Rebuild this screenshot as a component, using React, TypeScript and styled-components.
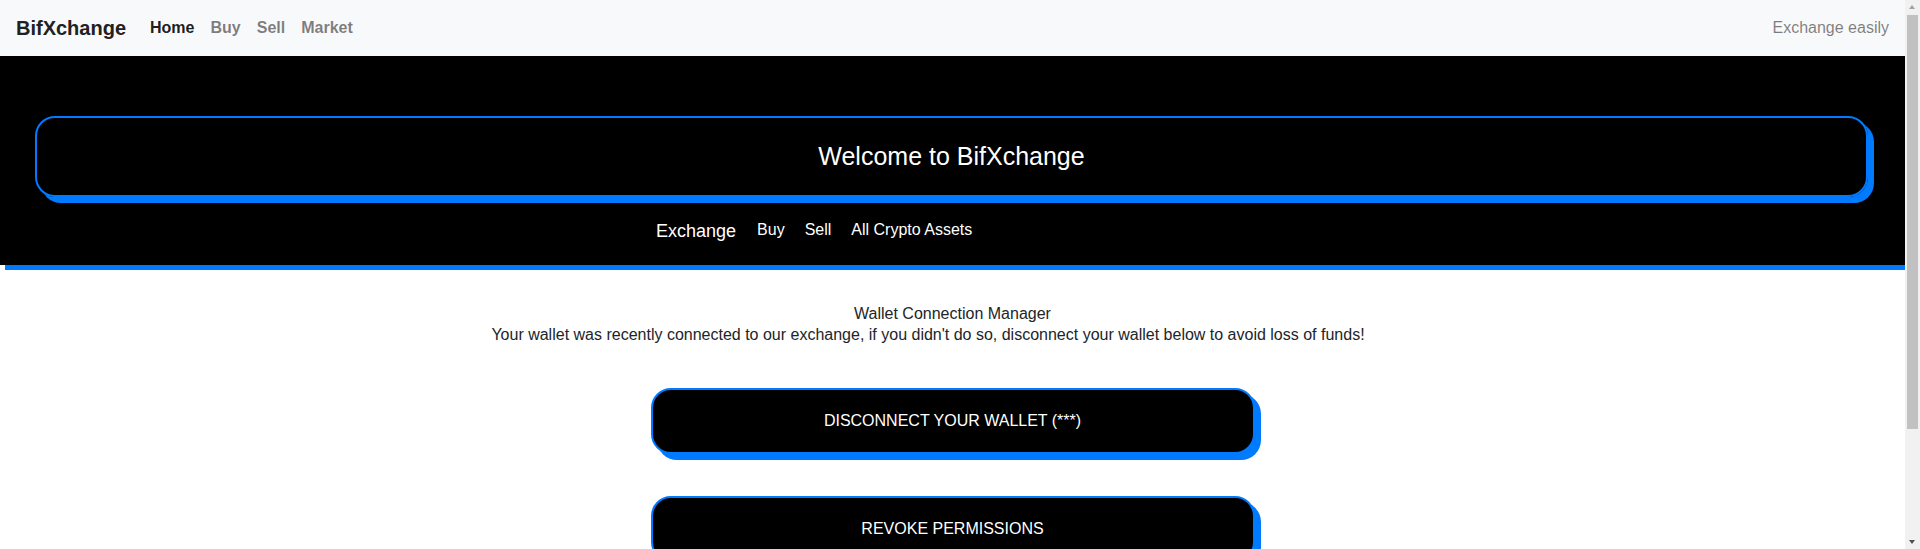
import React from "react";
import styled, { createGlobalStyle } from "styled-components";

const Global = createGlobalStyle`
  html, body { margin: 0; padding: 0; }
  body {
    font-family: "Liberation Sans", Arial, Helvetica, sans-serif;
    font-size: 16px;
    color: #212529;
    background: #fff;
  }
  * { box-sizing: border-box; }
`;

const Page = styled.div`
  margin-right: 15px;
  overflow: hidden;
  padding-bottom: 6px;
`;

const Navbar = styled.nav`
  height: 56px;
  background: #f8f9fa;
  display: flex;
  align-items: center;
  padding: 0 16px;
`;

const Brand = styled.a`
  font-size: 20px;
  font-weight: 700;
  color: #212121;
  margin-right: 16px;
  text-decoration: none;
  line-height: 30px;
`;

const NavLinks = styled.div`
  display: flex;
  align-items: center;
`;

const NavLink = styled.a<{ $active?: boolean }>`
  padding: 8px;
  font-size: 16px;
  font-weight: 700;
  text-decoration: none;
  color: ${(p) => (p.$active ? "rgba(0,0,0,0.9)" : "rgba(0,0,0,0.5)")};
`;

const NavText = styled.span`
  margin-left: auto;
  color: rgba(0, 0, 0, 0.5);
  font-size: 16px;
`;

const Hero = styled.header`
  background: #000;
  height: 209px;
  padding: 60px 37px 0 35px;
  box-shadow: 5px 5px 0 #007bff;
  display: flex;
  flex-direction: column;
`;

const WelcomeCard = styled.div`
  height: 81px;
  border: 2px solid #007bff;
  border-radius: 20px;
  box-shadow: 6px 6px 0 #007bff;
  display: flex;
  align-items: center;
  justify-content: center;
  color: #fff;
  font-size: 25px;
`;

const SubNav = styled.div`
  flex: 1;
  display: flex;
  align-items: center;
  padding: 0 0 2px 621px;
  gap: 20px;
  color: #fff;
`;

const SubBrand = styled.span`
  font-size: 18px;
  padding-top: 3px;
  margin-right: 1px;
`;

const SubLink = styled.a`
  font-size: 16px;
  color: #fff;
  text-decoration: none;
`;

const Main = styled.main`
  padding: 38px 0 116px;
  display: flex;
  flex-direction: column;
  align-items: center;
`;

const Intro = styled.div`
  text-align: center;
  line-height: 21px;
  font-size: 16px;
  color: #212529;
`;

const IntroTitle = styled.div``;

const IntroNote = styled.div`
  padding-right: 49px;
`;

const Buttons = styled.div`
  margin-top: 43px;
  display: flex;
  flex-direction: column;
  align-items: center;
  gap: 42px;
`;

const ActionButton = styled.button`
  width: 604px;
  height: 66px;
  background: #000;
  color: #fff;
  border: 2px solid #007bff;
  border-radius: 20px;
  box-shadow: 6px 6px 0 #007bff;
  font-family: "Liberation Sans", Arial, Helvetica, sans-serif;
  font-size: 16px;
  text-transform: uppercase;
  cursor: pointer;
`;

const Scrollbar = styled.div`
  position: fixed;
  top: 0;
  right: 0;
  width: 15px;
  height: 100vh;
  background: #f1f1f1;
`;

const Thumb = styled.div`
  position: absolute;
  top: 15px;
  left: 2px;
  width: 11px;
  height: 414px;
  background: #c1c1c1;
`;

const Arrow = styled.div<{ $down?: boolean }>`
  position: absolute;
  left: 4px;
  width: 0;
  height: 0;
  border-left: 3.5px solid transparent;
  border-right: 3.5px solid transparent;
  ${(p) =>
    p.$down
      ? "bottom: 5px; border-top: 4px solid #505050;"
      : "top: 5px; border-bottom: 4px solid #a3a3a3;"}
`;

export default function App() {
  return (
    <>
      <Global />
      <Page>
        <Navbar>
          <Brand href="#">BifXchange</Brand>
          <NavLinks>
            <NavLink $active href="#">Home</NavLink>
            <NavLink href="#">Buy</NavLink>
            <NavLink href="#">Sell</NavLink>
            <NavLink href="#">Market</NavLink>
          </NavLinks>
          <NavText>Exchange easily</NavText>
        </Navbar>
        <Hero>
          <WelcomeCard>Welcome to BifXchange</WelcomeCard>
          <SubNav>
            <SubBrand>Exchange</SubBrand>
            <SubLink href="#">Buy</SubLink>
            <SubLink href="#">Sell</SubLink>
            <SubLink href="#">All Crypto Assets</SubLink>
          </SubNav>
        </Hero>
        <Main>
          <Intro>
            <IntroTitle>Wallet Connection Manager</IntroTitle>
            <IntroNote>
              Your wallet was recently connected to our exchange, if you didn't do so, disconnect your wallet below to avoid loss of funds!
            </IntroNote>
          </Intro>
          <Buttons>
            <ActionButton>Disconnect your wallet (***)</ActionButton>
            <ActionButton>Revoke permissions</ActionButton>
          </Buttons>
        </Main>
      </Page>
      <Scrollbar aria-hidden="true">
        <Arrow />
        <Thumb />
        <Arrow $down />
      </Scrollbar>
    </>
  );
}
